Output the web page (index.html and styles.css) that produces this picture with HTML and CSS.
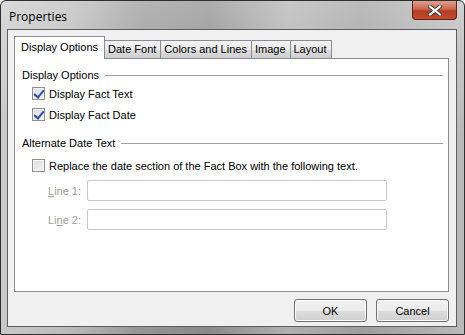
FILE: index.html
```html
<!DOCTYPE html>
<html lang="en">
<head>
    <meta charset="UTF-8">
    <title>Properties</title>
    <link rel="stylesheet" href="styles.css">
</head>
<body>
    <div class="window">
        <div class="titlebar">
            <span class="title">Properties</span>
            <div class="close-btn">
                <svg width="14" height="11" viewBox="0 0 14 11">
                    <path d="M2 1.5 L12 9.5 M12 1.5 L2 9.5" stroke="#3a3a3a" stroke-width="4" stroke-linecap="square"/>
                    <path d="M2 1.5 L12 9.5 M12 1.5 L2 9.5" stroke="#fff" stroke-width="2.2" stroke-linecap="square"/>
                </svg>
            </div>
        </div>

        <div class="client">
            <div class="tabs">
                <div class="tab active">Display Options</div>
                <div class="tab">Date Font</div>
                <div class="tab">Colors and Lines</div>
                <div class="tab">Image</div>
                <div class="tab">Layout</div>
            </div>

            <div class="panel">
                <div class="group-title"><span>Display Options</span></div>
                <label class="check-row">
                    <span class="checkbox checked"></span>
                    Display Fact Text
                </label>
                <label class="check-row">
                    <span class="checkbox checked"></span>
                    Display Fact Date
                </label>

                <div class="group-title second"><span>Alternate Date Text</span></div>
                <label class="check-row spaced">
                    <span class="checkbox"></span>
                    Replace the date section of the Fact Box with the following text.
                </label>
                <div class="field-row">
                    <span class="field-label"><u>L</u>ine 1:</span>
                    <div class="field-input"></div>
                </div>
                <div class="field-row">
                    <span class="field-label">Li<u>n</u>e 2:</span>
                    <div class="field-input"></div>
                </div>
            </div>

            <div class="buttons">
                <button class="btn">OK</button>
                <button class="btn">Cancel</button>
            </div>
        </div>
    </div>
</body>
</html>
```

FILE: styles.css
```css
* {
    margin: 0;
    padding: 0;
    box-sizing: border-box;
}

body {
    font-family: "Liberation Sans", Arial, sans-serif;
    font-size: 11px;
    color: #000;
    background: #fff;
}

.window {
    width: 465px;
    height: 335px;
    border: 1px solid #2e2e2e;
    border-radius: 6px 6px 0 0;
    background:
        linear-gradient(180deg, rgba(255, 255, 255, 0.3) 0%, rgba(255, 255, 255, 0) 40%),
        linear-gradient(90deg, #c9c9c9 0%, #bababa 15%, #959595 30%, #8a8a8a 45%, #b0b0b0 62%, #9e9e9e 78%, #bababa 100%);
    display: flex;
    flex-direction: column;
    overflow: hidden;
}

.titlebar {
    height: 28px;
    display: flex;
    align-items: flex-start;
    padding-left: 8px;
}

.title {
    margin-top: 7px;
    font-family: "Open Sans", "DejaVu Sans", sans-serif;
    font-size: 12px;
    color: #000;
}

.close-btn {
    margin-left: auto;
    margin-right: 7px;
    width: 45px;
    height: 19px;
    border: 1px solid #5a2418;
    border-top: none;
    border-radius: 0 0 4px 4px;
    background: linear-gradient(180deg, #e0a08e 0%, #cc6650 45%, #b43c22 55%, #c24b30 100%);
    display: flex;
    align-items: center;
    justify-content: center;
}

.client {
    flex: 1;
    margin: 0 7px 7px 6px;
    border: 1px solid #5e5e5e;
    background: #f0f0f0;
    padding: 6px 7px 0 6px;
    display: flex;
    flex-direction: column;
}

.tabs {
    display: flex;
    align-items: flex-end;
    height: 22px;
    position: relative;
    z-index: 1;
}

.tab {
    height: 18px;
    padding: 0 4px 0 3px;
    border: 1px solid #898c95;
    border-bottom: none;
    border-left: none;
    background: linear-gradient(180deg, #f2f2f2 0%, #ebebeb 50%, #dddddd 51%, #cfcfcf 100%);
    line-height: 17px;
}

.tab.active {
    padding: 0 6px;
    border-left: 1px solid #898c95;
    background: #fff;
    line-height: 20px;
    margin-bottom: -1px;
    height: 23px;
}

.panel {
    height: 234px;
    background: #fff;
    border: 1px solid #898c95;
    padding: 9px 5px 0 7px;
}

.group-title {
    display: flex;
    align-items: center;
    height: 14px;
}

.group-title::after {
    content: "";
    flex: 1;
    height: 1px;
    background: #a0a0a0;
    margin-left: 6px;
}

.group-title.second {
    margin-top: 11px;
}

.check-row {
    display: flex;
    align-items: center;
    height: 21px;
    padding-left: 10px;
    gap: 4px;
}

.group-title + .check-row {
    margin-top: 1px;
}

.group-title + .check-row.spaced {
    margin-top: 5px;
}

.checkbox {
    width: 13px;
    height: 13px;
    border: 1px solid #8f8f8f;
    background: linear-gradient(135deg, #dcdcdc 0%, #f4f4f4 100%);
    box-shadow: inset 0 0 0 1px #f5f5f5;
    position: relative;
}

.checkbox.checked::after {
    content: "";
    position: absolute;
    left: 3px;
    top: 0px;
    width: 4px;
    height: 8px;
    border-right: 2px solid #2a4fb3;
    border-bottom: 2px solid #2a4fb3;
    transform: rotate(40deg);
}

.field-row {
    display: flex;
    align-items: center;
    margin-top: 8px;
    padding-left: 26px;
}

.check-row + .field-row {
    margin-top: 4px;
}

.field-label {
    width: 39px;
    color: #a0a0a0;
}

.field-label u {
    text-decoration: underline;
}

.field-input {
    width: 300px;
    height: 21px;
    border: 1px solid #c8c8c8;
    border-radius: 2px;
    background: #fff;
}

.buttons {
    display: flex;
    justify-content: flex-end;
    gap: 9px;
    margin-top: 7px;
}

.btn {
    width: 73px;
    height: 23px;
    font-family: inherit;
    font-size: 11px;
    border: 1px solid #707070;
    border-radius: 3px;
    background: linear-gradient(180deg, #f2f2f2 0%, #ebebeb 50%, #dddddd 51%, #cfcfcf 100%);
    box-shadow: inset 0 0 0 1px #fcfcfc;
    color: #000;
}
```
